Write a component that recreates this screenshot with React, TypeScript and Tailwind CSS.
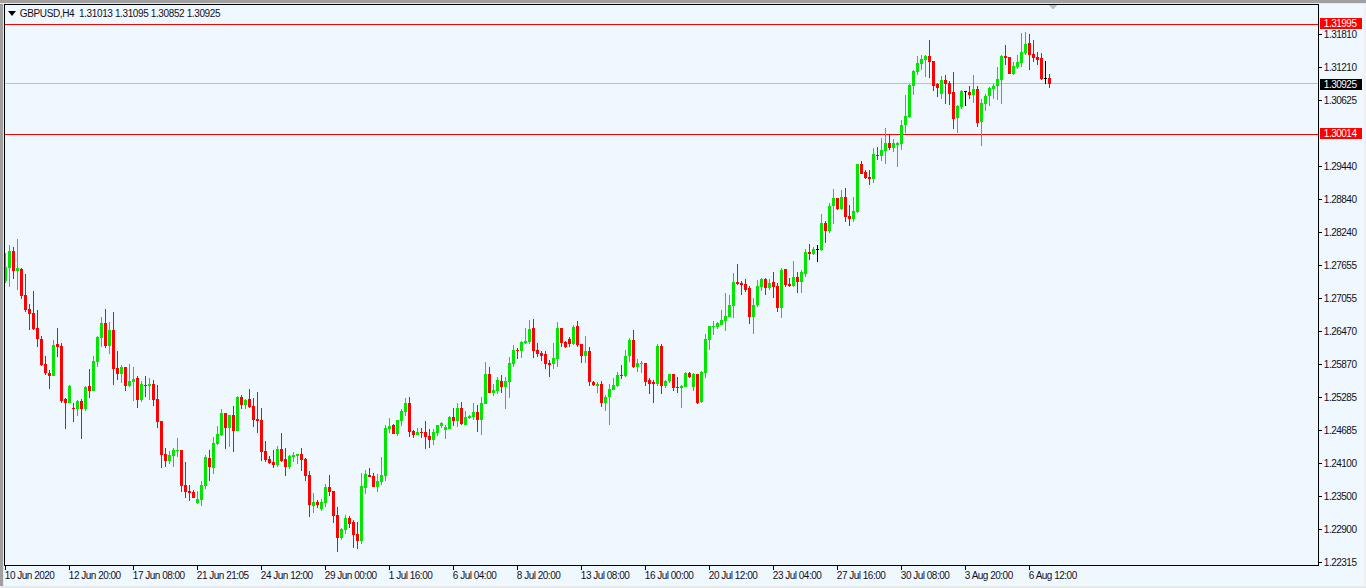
const candles: [number, number, number, number, string][] = [
  [253, 267, 281, 283, 'g'], [245, 251, 268, 287, 'g'], [247, 251, 271, 279, 'r'], [239, 268, 271, 290, 'g'],
  [268, 269, 296, 299, 'r'], [274, 295, 310, 312, 'r'], [304, 309, 314, 330, 'r'], [291, 313, 329, 330, 'r'],
  [310, 328, 339, 347, 'r'], [336, 339, 365, 366, 'r'], [356, 364, 373, 375, 'r'], [370, 373, 376, 389, 'r'],
  [340, 345, 376, 376, 'g'], [328, 344, 347, 357, 'r'], [343, 346, 401, 403, 'r'], [398, 399, 403, 429, 'r'],
  [385, 386, 403, 403, 'g'], [403, 408, 409, 422, 'r'], [400, 401, 409, 416, 'g'], [399, 401, 409, 439, 'r'],
  [386, 387, 409, 411, 'g'], [369, 386, 391, 398, 'r'], [356, 361, 391, 391, 'g'], [336, 337, 362, 367, 'g'],
  [317, 323, 338, 347, 'g'], [309, 323, 346, 348, 'r'], [322, 330, 346, 354, 'g'], [312, 330, 369, 385, 'r'],
  [351, 368, 374, 380, 'r'], [365, 367, 374, 383, 'g'], [367, 367, 386, 391, 'r'], [364, 381, 386, 387, 'g'],
  [367, 379, 382, 401, 'g'], [376, 378, 400, 408, 'r'], [381, 384, 400, 402, 'g'], [376, 385, 386, 397, 'r'],
  [378, 384, 386, 400, 'g'], [380, 384, 400, 406, 'r'], [385, 399, 422, 428, 'r'], [421, 421, 455, 468, 'r'],
  [448, 454, 461, 467, 'r'], [451, 455, 461, 464, 'g'], [448, 450, 456, 467, 'g'], [438, 450, 451, 457, 'g'],
  [450, 450, 486, 492, 'r'], [462, 485, 492, 498, 'r'], [485, 491, 493, 501, 'r'], [490, 492, 498, 498, 'r'],
  [491, 499, 503, 504, 'g'], [481, 485, 500, 506, 'g'], [455, 457, 486, 489, 'g'], [450, 458, 467, 481, 'r'],
  [437, 443, 468, 474, 'g'], [426, 434, 444, 445, 'g'], [409, 413, 435, 436, 'g'], [413, 413, 428, 449, 'r'],
  [415, 415, 428, 447, 'g'], [406, 415, 431, 452, 'r'], [396, 397, 431, 431, 'g'], [395, 397, 405, 409, 'r'],
  [399, 400, 405, 409, 'g'], [389, 399, 407, 408, 'r'], [398, 406, 420, 427, 'r'], [392, 419, 421, 433, 'r'],
  [408, 420, 452, 461, 'r'], [441, 451, 460, 462, 'r'], [456, 459, 463, 464, 'r'], [450, 462, 465, 468, 'r'],
  [446, 449, 465, 467, 'g'], [433, 449, 461, 462, 'r'], [448, 459, 467, 476, 'r'], [455, 456, 467, 469, 'g'],
  [452, 455, 457, 462, 'g'], [454, 454, 456, 464, 'g'], [448, 454, 460, 471, 'r'], [458, 459, 476, 481, 'r'],
  [471, 475, 505, 517, 'r'], [493, 502, 506, 513, 'g'], [500, 502, 505, 508, 'r'], [499, 502, 509, 511, 'g'],
  [484, 487, 503, 507, 'g'], [475, 487, 492, 496, 'r'], [491, 491, 516, 523, 'r'], [507, 515, 538, 552, 'r'],
  [528, 529, 538, 540, 'g'], [515, 518, 530, 534, 'g'], [516, 518, 524, 528, 'r'], [520, 522, 535, 548, 'r'],
  [522, 534, 541, 549, 'r'], [473, 486, 541, 544, 'g'], [470, 474, 488, 494, 'g'], [468, 475, 477, 477, 'r'],
  [473, 476, 487, 487, 'r'], [474, 481, 487, 492, 'g'], [457, 475, 482, 485, 'g'], [425, 428, 476, 481, 'g'],
  [418, 426, 429, 433, 'g'], [424, 425, 434, 434, 'r'], [420, 420, 434, 436, 'g'], [409, 411, 421, 426, 'g'],
  [398, 403, 412, 416, 'g'], [397, 403, 432, 437, 'r'], [430, 431, 435, 438, 'r'], [428, 432, 435, 435, 'g'],
  [428, 432, 433, 438, 'r'], [421, 432, 437, 449, 'r'], [429, 436, 440, 448, 'r'], [429, 432, 440, 445, 'g'],
  [425, 425, 433, 436, 'g'], [422, 423, 426, 428, 'g'], [425, 427, 430, 439, 'g'], [416, 417, 429, 429, 'g'],
  [408, 417, 421, 426, 'r'], [403, 408, 421, 427, 'g'], [402, 408, 424, 425, 'r'], [411, 417, 425, 425, 'g'],
  [415, 416, 418, 419, 'g'], [403, 412, 417, 420, 'g'], [405, 412, 420, 432, 'r'], [397, 403, 420, 435, 'g'],
  [362, 374, 404, 404, 'g'], [367, 374, 393, 393, 'r'], [384, 390, 393, 396, 'g'], [377, 380, 391, 394, 'g'],
  [375, 381, 387, 393, 'r'], [377, 381, 387, 409, 'g'], [357, 363, 382, 398, 'g'], [345, 350, 364, 367, 'g'],
  [348, 350, 351, 359, 'r'], [341, 342, 351, 358, 'g'], [328, 341, 343, 344, 'g'], [320, 329, 342, 344, 'g'],
  [319, 328, 351, 358, 'r'], [343, 350, 354, 357, 'r'], [351, 353, 356, 361, 'r'], [351, 354, 364, 369, 'r'],
  [360, 363, 365, 377, 'r'], [343, 358, 364, 369, 'g'], [322, 328, 359, 367, 'g'], [328, 328, 343, 347, 'r'],
  [341, 342, 347, 348, 'r'], [337, 339, 344, 347, 'r'], [325, 327, 344, 345, 'g'], [321, 326, 345, 347, 'r'],
  [344, 344, 356, 363, 'r'], [336, 351, 356, 363, 'g'], [347, 351, 382, 386, 'r'], [381, 382, 385, 386, 'r'],
  [382, 384, 386, 393, 'g'], [381, 384, 403, 407, 'r'], [395, 397, 403, 411, 'g'], [384, 389, 397, 425, 'g'],
  [378, 385, 390, 390, 'g'], [372, 375, 386, 387, 'g'], [365, 375, 376, 379, 'r'], [350, 356, 376, 377, 'g'],
  [338, 340, 356, 362, 'g'], [330, 340, 367, 368, 'r'], [359, 363, 367, 372, 'g'], [361, 363, 364, 373, 'g'],
  [363, 363, 382, 386, 'r'], [378, 380, 384, 394, 'r'], [380, 382, 384, 403, 'r'], [344, 346, 384, 386, 'g'],
  [344, 346, 386, 394, 'r'], [380, 381, 386, 388, 'g'], [374, 374, 381, 383, 'g'], [374, 374, 388, 391, 'r'],
  [377, 387, 388, 393, 'r'], [385, 386, 388, 408, 'g'], [372, 373, 387, 387, 'g'], [372, 373, 377, 378, 'r'],
  [373, 374, 387, 391, 'g'], [374, 374, 403, 404, 'r'], [371, 372, 402, 403, 'g'], [334, 339, 373, 378, 'g'],
  [326, 326, 340, 350, 'g'], [321, 326, 327, 335, 'g'], [322, 323, 327, 329, 'g'], [310, 320, 325, 325, 'g'],
  [293, 316, 321, 331, 'g'], [295, 305, 317, 317, 'g'], [273, 282, 306, 318, 'g'], [264, 282, 284, 285, 'r'],
  [281, 283, 285, 295, 'r'], [279, 284, 290, 292, 'r'], [286, 288, 317, 324, 'r'], [298, 305, 317, 334, 'g'],
  [280, 286, 305, 307, 'g'], [278, 279, 287, 291, 'g'], [278, 279, 288, 295, 'r'], [279, 283, 288, 290, 'g'],
  [272, 282, 287, 298, 'r'], [283, 286, 308, 312, 'r'], [268, 270, 308, 318, 'g'], [269, 269, 285, 287, 'r'],
  [278, 284, 286, 287, 'r'], [261, 277, 286, 287, 'g'], [272, 277, 282, 293, 'r'], [270, 272, 282, 293, 'g'],
  [249, 252, 274, 277, 'g'], [244, 252, 254, 260, 'r'], [247, 249, 254, 255, 'g'], [245, 249, 250, 262, 'k'],
  [214, 223, 250, 251, 'g'], [221, 223, 231, 243, 'r'], [203, 206, 231, 233, 'g'], [189, 198, 206, 224, 'g'],
  [198, 198, 209, 210, 'r'], [190, 197, 209, 210, 'g'], [188, 197, 217, 222, 'r'], [205, 216, 219, 226, 'r'],
  [197, 211, 219, 222, 'g'], [164, 164, 212, 213, 'g'], [161, 164, 174, 174, 'r'], [170, 172, 178, 179, 'r'],
  [170, 177, 179, 185, 'r'], [148, 154, 179, 183, 'g'], [147, 155, 156, 160, 'r'], [138, 150, 156, 161, 'g'],
  [128, 143, 151, 164, 'g'], [134, 143, 148, 150, 'r'], [139, 143, 148, 152, 'g'], [142, 143, 145, 167, 'g'],
  [120, 125, 144, 150, 'g'], [95, 116, 125, 133, 'g'], [84, 85, 117, 118, 'g'], [70, 71, 86, 95, 'g'],
  [56, 63, 72, 75, 'g'], [55, 59, 64, 70, 'g'], [55, 56, 60, 77, 'g'], [40, 56, 62, 78, 'r'],
  [61, 61, 86, 91, 'r'], [83, 84, 88, 97, 'r'], [76, 80, 94, 99, 'g'], [75, 80, 84, 104, 'r'],
  [81, 83, 94, 105, 'r'], [72, 92, 119, 129, 'r'], [105, 106, 118, 133, 'g'], [90, 91, 107, 109, 'g'],
  [91, 91, 92, 106, 'k'], [86, 92, 95, 99, 'r'], [75, 89, 95, 103, 'g'], [86, 89, 123, 127, 'r'],
  [99, 103, 122, 146, 'g'], [94, 96, 104, 111, 'g'], [87, 88, 96, 106, 'g'], [84, 86, 89, 99, 'g'],
  [67, 79, 86, 100, 'g'], [55, 56, 80, 104, 'g'], [45, 56, 58, 65, 'r'], [57, 57, 74, 74, 'r'],
  [62, 66, 74, 75, 'g'], [55, 62, 67, 69, 'g'], [33, 52, 63, 67, 'g'], [32, 44, 53, 55, 'g'],
  [34, 43, 55, 70, 'r'], [40, 54, 58, 62, 'r'], [52, 57, 60, 65, 'r'], [53, 58, 79, 80, 'r'],
  [61, 78, 79, 84, 'k'], [74, 78, 84, 88, 'r'],
]

const colors: Record<string, string> = { g: '#00e600', r: '#ff0000', k: '#000000' }

const priceRows = [
  '1.31810', '1.31210', '1.30625', '1.30014', '1.29440', '1.28840', '1.28240', '1.27655', '1.27055',
  '1.26470', '1.25870', '1.25285', '1.24685', '1.24100', '1.23500', '1.22900', '1.22315',
]

const timeLabels = [
  '10 Jun 2020', '12 Jun 20:00', '17 Jun 08:00', '21 Jun 21:05', '24 Jun 12:00', '29 Jun 00:00',
  '1 Jul 16:00', '6 Jul 04:00', '8 Jul 20:00', '13 Jul 08:00', '16 Jul 00:00', '20 Jul 12:00',
  '23 Jul 04:00', '27 Jul 16:00', '30 Jul 08:00', '3 Aug 20:00', '6 Aug 12:00',
]

function Chart() {
  return (
    <svg width={1313} height={560} viewBox="5 5 1313 560" shapeRendering="crispEdges" className="block">
      <rect x={5} y={24} width={1313} height={1} fill="#ff0000" />
      <rect x={5} y={134} width={1313} height={1} fill="#ff0000" />
      <rect x={5} y={83} width={1313} height={1} fill="#c0c0c0" />
      {candles.map(([high, top, bottom, low, c], i) => {
        const x = 5 + i * 4
        return (
          <g key={i} fill={colors[c]}>
            <rect x={x} y={high} width={1} height={Math.max(low - high, 1)} />
            <rect x={x - 1} y={top} width={3} height={Math.max(bottom - top, 1)} />
          </g>
        )
      })}
      <polygon points="1049,5 1057,5 1053,10" fill="#c0c0c0" />
    </svg>
  )
}

export default function App() {
  return (
    <div className="flex h-[588px] w-[1366px] flex-col overflow-hidden bg-[#f0f8ff] text-[10px] tracking-[-0.5px] text-[#10101a] [font-family:'Liberation_Sans',sans-serif]">
      <div className="h-[3px] bg-[#a0a0a0]" />
      <div className="h-[1px] bg-[#e8e8e8]" />
      <div className="flex h-[582px]">
        <div className="flex w-[4px] bg-[#e8e8e8]">
          <div className="w-[3px] bg-[#a0a0a0]" />
        </div>
        <div className="w-[1315px]">
          <div className="relative h-[562px] border border-black">
            <Chart />
            <div className="absolute left-[3px] top-[1px] flex h-[14px] items-center gap-[4px] whitespace-pre tracking-[-0.38px]">
              <svg width={8} height={5} viewBox="0 0 8 5" className="mt-[1px]">
                <polygon points="0,0 8,0 4,5" fill="#000000" />
              </svg>
              <span>GBPUSD,H4  1.31013 1.31095 1.30852 1.30925</span>
            </div>
          </div>
          <div className="ml-[1px] grid grid-cols-[repeat(17,64px)]">
            {timeLabels.map((t) => (
              <div key={t} className="whitespace-nowrap">
                <div className="h-[4px] w-[1px] bg-black" />
                <div className="mt-[-1px] h-[14px] leading-[14px]">{t}</div>
              </div>
            ))}
          </div>
        </div>
        <div className="relative w-[47px]">
          <div className="pt-[14px]">
            {priceRows.map((p) =>
              p === '1.30014' ? (
                <div key={p} className="flex h-[33px] items-center pl-[1px]">
                  <div className="h-[11px] w-[42px] bg-[#ff0000] pl-[4px] leading-[11px] text-white">{p}</div>
                </div>
              ) : (
                <div key={p} className="flex h-[33px] items-center gap-[2px]">
                  <div className="h-[1px] w-[3px] bg-black" />
                  <span>{p}</span>
                </div>
              ),
            )}
          </div>
          <div className="absolute left-[1px] top-[14px] h-[11px] w-[42px] bg-[#ff0000] pl-[4px] leading-[11px] text-white">1.31995</div>
          <div className="absolute left-[1px] top-[75px] h-[11px] w-[42px] bg-black pl-[4px] leading-[11px] text-white">1.30925</div>
        </div>
        <div className="w-[2px] bg-[#f0f0f0]" />
      </div>
      <div className="h-[2px] bg-[#e8e8e8]" />
    </div>
  )
}
